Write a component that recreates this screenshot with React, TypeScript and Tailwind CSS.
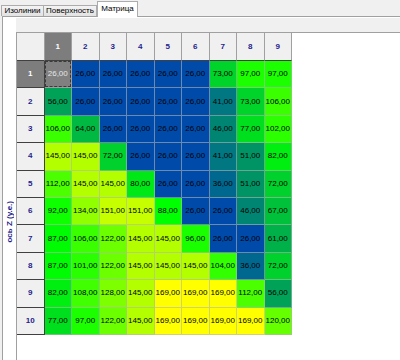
const data = [
  [26, 26, 26, 26, 26, 26, 73, 97, 97],
  [56, 26, 26, 26, 26, 26, 41, 73, 106],
  [106, 64, 26, 26, 26, 26, 46, 77, 102],
  [145, 145, 72, 26, 26, 26, 41, 51, 82],
  [112, 145, 145, 80, 26, 26, 36, 51, 72],
  [92, 134, 151, 151, 88, 26, 26, 46, 67],
  [87, 106, 122, 145, 145, 96, 26, 26, 61],
  [87, 101, 122, 145, 145, 145, 104, 36, 72],
  [82, 108, 128, 145, 169, 169, 169, 112, 56],
  [77, 97, 122, 145, 169, 169, 169, 169, 120],
];

// blue -> green -> yellow
function cellColor(v: number) {
  if (v <= 88) {
    const t = (v - 26) / 62;
    const g = Math.round(75 + 180 * t);
    const b = Math.round(170 * (1 - t));
    return `rgb(0,${g},${b})`;
  }
  const t = (v - 88) / 81;
  return `rgb(${Math.round(255 * t)},255,0)`;
}

const fmt = (v: number) => `${v},00`;

export default function App() {
  return (
    <div className="w-[400px] h-[360px] overflow-hidden bg-[#f0f0f0] font-['Liberation_Sans',Arial,sans-serif] text-[8px] text-black flex flex-col">
      {/* tabs */}
      <div className="relative z-10 flex items-end h-[16px] pl-[1px] shrink-0">
        <div className="w-[43px] h-[11px] border border-b-0 border-[#acacac] bg-gradient-to-b from-[#f4f4f4] to-[#e2e2e2] flex items-center justify-center leading-none">
          Изолинии
        </div>
        <div className="w-[53px] h-[11px] border border-b-0 border-l-0 border-[#acacac] bg-gradient-to-b from-[#f4f4f4] to-[#e2e2e2] flex items-center justify-center leading-none">
          Поверхность
        </div>
        <div className="w-[41px] h-[16px] -mb-px border border-b-0 border-[#acacac] bg-white flex items-center justify-center leading-none pb-[2px]">
          Матрица
        </div>
      </div>

      {/* panel */}
      <div className="flex-1 ml-[2px] border-l border-t border-[#a0a0a0] bg-white flex">
        <div className="w-[13px] shrink-0 flex flex-col items-center">
          <div className="h-[16px]" />
          <div className="pt-[168px]">
            <div className="[writing-mode:vertical-rl] rotate-180 font-bold text-[#1e1e8c] leading-[10px] whitespace-nowrap">
              ось Z (у.е.)
            </div>
          </div>
        </div>

        <div className="flex-1 flex flex-col">
          <div className="mt-[1px] h-[15px] bg-[#f0f0f0] border-b border-[#a0a0a0] shrink-0" />
          <div className="flex-1 border-l border-[#a0a0a0]">
            <div className="grid grid-cols-[repeat(10,27.5px)] grid-rows-[28px_repeat(10,27.4px)]">
              {/* corner */}
              <div className="bg-[#f0f0f0] border-r border-b border-r-[#a0a0a0] border-b-[#404040]" />
              {Array.from({ length: 9 }, (_, c) => (
                <div
                  key={`h${c}`}
                  className={`flex items-center justify-center font-bold border-r border-b border-r-[#a0a0a0] border-b-[#404040] ${
                    c === 0 ? "bg-[#7d7d7d] text-white" : "bg-[#f0f0f0] text-[#1e1e8c]"
                  }`}
                >
                  {c + 1}
                </div>
              ))}

              {data.map((row, r) => (
                <div key={`r${r}`} className="contents">
                  <div
                    className={`flex items-center justify-center font-bold border-r border-b border-[#404040] ${
                      r === 0 ? "bg-[#7d7d7d] text-white" : "bg-[#f0f0f0] text-[#1e1e8c]"
                    }`}
                  >
                    {r + 1}
                  </div>
                  {row.map((v, c) =>
                    r === 0 && c === 0 ? (
                      <div
                        key={c}
                        className="flex items-center justify-center bg-[#808080] text-[#e6e6e6] border-r border-b border-[#b4b4b4]/60"
                      >
                        <div className="w-full h-full border border-dashed border-[#3a3a3a] flex items-center justify-center">
                          {fmt(v)}
                        </div>
                      </div>
                    ) : (
                      <div
                        key={c}
                        className="flex items-center justify-center border-r border-b border-[#b4b4b4]/60"
                        style={{ backgroundColor: cellColor(v) }}
                      >
                        {fmt(v)}
                      </div>
                    )
                  )}
                </div>
              ))}
            </div>
          </div>
        </div>
      </div>
    </div>
  );
}
